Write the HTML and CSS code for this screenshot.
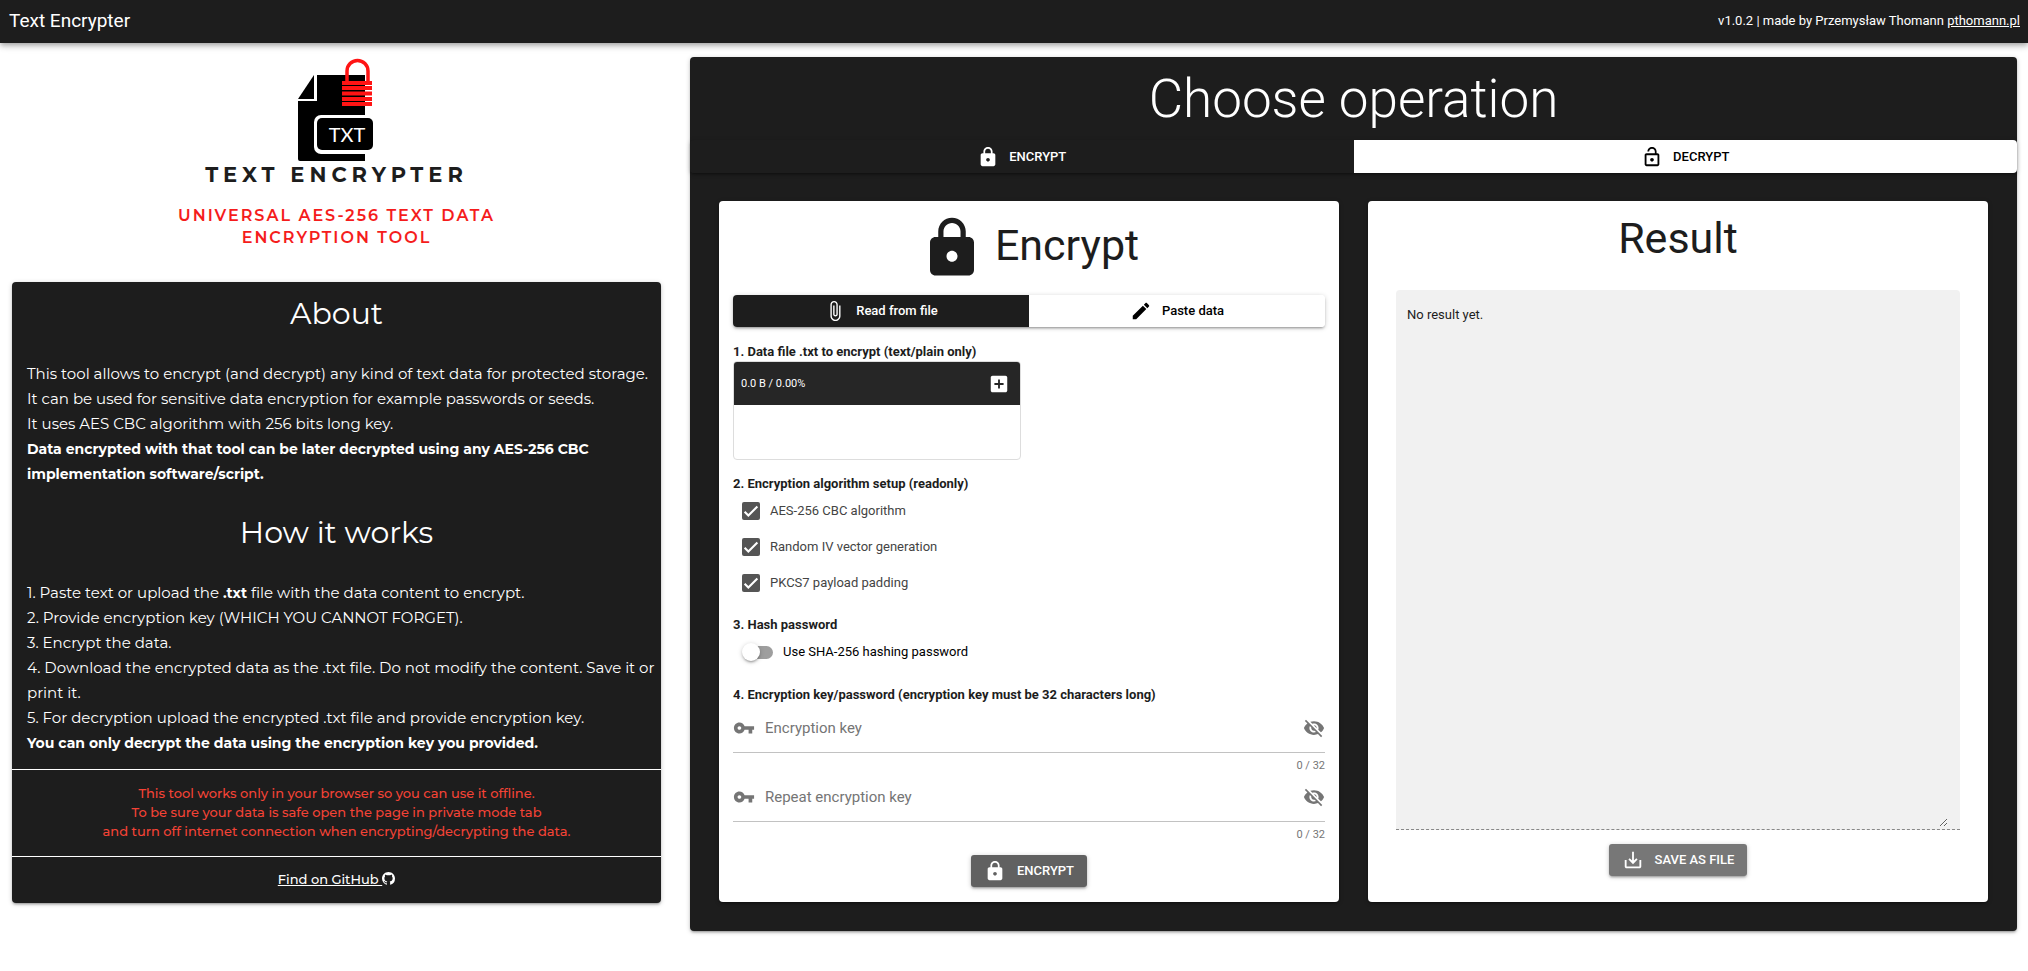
FILE: index.html
```html
<!DOCTYPE html>
<html lang="en">
<head>
<meta charset="utf-8">
<title>Text Encrypter</title>
<link rel="stylesheet" href="styles.css">
</head>
<body>
<svg class="sprite" aria-hidden="true">
  <symbol id="lock" viewBox="0 0 24 24"><path d="M18 8h-1V6c0-2.76-2.24-5-5-5S7 3.24 7 6v2H6c-1.1 0-2 .9-2 2v10c0 1.1.9 2 2 2h12c1.1 0 2-.9 2-2V10c0-1.1-.9-2-2-2zm-6 9c-1.1 0-2-.9-2-2s.9-2 2-2 2 .9 2 2-.9 2-2 2zm3.1-9H8.9V6c0-1.71 1.39-3.1 3.1-3.1 1.71 0 3.1 1.39 3.1 3.1v2z"/></symbol>
  <symbol id="lock-open" viewBox="0 0 24 24"><path d="M12 17c1.1 0 2-.9 2-2s-.9-2-2-2-2 .9-2 2 .9 2 2 2zm6-9h-1V6c0-2.76-2.24-5-5-5S7 3.24 7 6h1.9c0-1.71 1.39-3.1 3.1-3.1 1.71 0 3.1 1.39 3.1 3.1v2H6c-1.1 0-2 .9-2 2v10c0 1.1.9 2 2 2h12c1.1 0 2-.9 2-2V10c0-1.1-.9-2-2-2zm0 12H6V10h12v10z"/></symbol>
  <symbol id="attach" viewBox="0 0 24 24"><path d="M16.5 6v11.5c0 2.21-1.79 4-4 4s-4-1.79-4-4V5c0-1.38 1.12-2.5 2.5-2.5s2.5 1.12 2.5 2.5v10.5c0 .55-.45 1-1 1s-1-.45-1-1V6H10v9.5c0 1.38 1.12 2.5 2.5 2.5s2.5-1.12 2.5-2.5V5c0-2.21-1.79-4-4-4S7 2.79 7 5v12.5c0 3.04 2.46 5.5 5.5 5.5s5.5-2.46 5.5-5.5V6h-1.5z"/></symbol>
  <symbol id="edit" viewBox="0 0 24 24"><path d="M3 17.25V21h3.75L17.81 9.94l-3.75-3.75L3 17.25zM20.71 7.04c.39-.39.39-1.02 0-1.41l-2.34-2.34c-.39-.39-1.02-.39-1.41 0l-1.83 1.83 3.75 3.75 1.83-1.83z"/></symbol>
  <symbol id="add-box" viewBox="0 0 24 24"><path d="M19 3H5c-1.11 0-2 .9-2 2v14c0 1.1.89 2 2 2h14c1.1 0 2-.9 2-2V5c0-1.1-.9-2-2-2zm-2 10h-4v4h-2v-4H7v-2h4V7h2v4h4v2z"/></symbol>
  <symbol id="key" viewBox="0 0 24 24"><path d="M12.65 10C11.83 7.67 9.61 6 7 6c-3.31 0-6 2.69-6 6s2.69 6 6 6c2.61 0 4.83-1.67 5.65-4H17v4h4v-4h2v-4H12.65zM7 14c-1.1 0-2-.9-2-2s.9-2 2-2 2 .9 2 2-.9 2-2 2z"/></symbol>
  <symbol id="eye-off" viewBox="0 0 24 24"><path d="M12 7c2.76 0 5 2.24 5 5 0 .65-.13 1.26-.36 1.83l2.92 2.92c1.51-1.26 2.7-2.89 3.43-4.75-1.73-4.39-6-7.5-11-7.5-1.4 0-2.74.25-3.98.7l2.16 2.16C10.74 7.13 11.35 7 12 7zM2 4.27l2.28 2.28.46.46C3.08 8.3 1.78 10.02 1 12c1.73 4.39 6 7.5 11 7.5 1.55 0 3.03-.3 4.38-.84l.42.42L19.73 22 21 20.73 3.27 3 2 4.27zM7.53 9.8l1.55 1.55c-.05.21-.08.43-.08.65 0 1.66 1.34 3 3 3 .22 0 .44-.03.65-.08l1.55 1.55c-.67.33-1.41.53-2.2.53-2.76 0-5-2.24-5-5 0-.79.2-1.53.53-2.2zm4.31-.78l3.15 3.15.02-.16c0-1.66-1.34-3-3-3l-.17.01z"/></symbol>
  <symbol id="save" viewBox="0 0 24 24"><path d="M19 12v7H5v-7H3v7c0 1.1.9 2 2 2h14c1.1 0 2-.9 2-2v-7h-2zm-6 .67l2.59-2.58L17 11.5l-5 5-5-5 1.41-1.41L11 12.67V3h2z"/></symbol>
  <symbol id="github" viewBox="0 0 16 16"><path d="M8 0C3.58 0 0 3.58 0 8c0 3.54 2.29 6.53 5.47 7.59.4.07.55-.17.55-.38 0-.19-.01-.82-.01-1.49-2.01.37-2.53-.49-2.69-.94-.09-.23-.48-.94-.82-1.13-.28-.15-.68-.52-.01-.53.63-.01 1.08.58 1.23.82.72 1.21 1.87.87 2.33.66.07-.52.28-.87.51-1.07-1.78-.2-3.64-.89-3.64-3.95 0-.87.31-1.59.82-2.15-.08-.2-.36-1.02.08-2.12 0 0 .67-.21 2.2.82.64-.18 1.32-.27 2-.27.68 0 1.36.09 2 .27 1.53-1.04 2.2-.82 2.2-.82.44 1.1.16 1.92.08 2.12.51.56.82 1.27.82 2.15 0 3.07-1.87 3.75-3.65 3.95.29.25.54.73.54 1.48 0 1.07-.01 1.93-.01 2.2 0 .21.15.46.55.38A8.013 8.013 0 0016 8c0-4.42-3.58-8-8-8z"/></symbol>
  <symbol id="tick" viewBox="0 0 24 24"><path d="M3.5 13L8.5 18L20.5 6" fill="none" stroke="#fff" stroke-width="2.8"/></symbol>
</svg>

<header class="topbar">
  <div class="topbar-title">Text Encrypter</div>
  <div class="topbar-meta">v1.0.2 | made by Przemysław Thomann <a href="#">pthomann.pl</a></div>
</header>

<main class="page">
  <aside class="side">
    <div class="brand">
      <svg class="brand-mark" viewBox="2 -1 80 106" role="img" aria-label="Text Encrypter logo">
        <path d="M22 17H70V103H5Q3 103 3 101V42H22Z"/>
        <path d="M3 41L19 17V41Z"/>
        <path d="M21 17V42H3" fill="none" stroke="#fff" stroke-width="2"/>
        <rect x="19" y="57" width="70" height="39" rx="7" fill="#fff"/>
        <rect x="22" y="60" width="56" height="32" rx="5"/>
        <text x="52" y="84" class="brand-mark-text">TXT</text>
        <path d="M52 24V13a10 10 0 0 1 21 0V24" fill="none" stroke="#ff1414" stroke-width="3.5"/>
        <path d="M47 23h30v4H47zM47 28h30v4H47zM47 33.500h30v4H47zM47 39h30v4H47zM47 44h30v4H47z" fill="#ff1414"/>
      </svg>
      <div class="brand-name">TEXT ENCRYPTER</div>
      <p class="brand-tagline">UNIVERSAL AES-256 TEXT DATA<br>ENCRYPTION TOOL</p>
    </div>

    <section class="card about">
      <div class="about-body">
        <h2>About</h2>
        <p>This tool allows to encrypt (and decrypt) any kind of text data for protected storage.<br>It can be used for sensitive data encryption for example passwords or seeds.<br>It uses AES CBC algorithm with 256 bits long key.<br><b>Data encrypted with that tool can be later decrypted using any AES-256 CBC implementation software/script.</b></p>
        <h2>How it works</h2>
        <p>1. Paste text or upload the <b>.txt</b> file with the data content to encrypt.<br>2. Provide encryption key (WHICH YOU CANNOT FORGET).<br>3. Encrypt the data.<br>4. Download the encrypted data as the .txt file. Do not modify the content. Save it or print it.<br>5. For decryption upload the encrypted .txt file and provide encryption key.<br><b>You can only decrypt the data using the encryption key you provided.</b></p>
      </div>
      <p class="about-warning">This tool works only in your browser so you can use it offline.<br>To be sure your data is safe open the page in private mode tab<br>and turn off internet connection when encrypting/decrypting the data.</p>
      <div class="about-link"><a href="#">Find on GitHub <svg class="icon-inline"><use href="#github"/></svg></a></div>
    </section>
  </aside>

  <div class="main">
    <section class="card operation">
      <h1>Choose operation</h1>
      <div class="tabs">
        <button type="button" class="tab tab-dark"><svg class="icon"><use href="#lock"/></svg>ENCRYPT</button>
        <button type="button" class="tab tab-light"><svg class="icon"><use href="#lock-open"/></svg>DECRYPT</button>
      </div>

      <div class="panels">
        <form class="card panel panel-form">
          <h2 class="panel-title"><svg class="icon-large"><use href="#lock"/></svg><span>Encrypt</span></h2>
          <div class="source">
            <button type="button" class="tab tab-dark"><svg class="icon"><use href="#attach"/></svg>Read from file</button>
            <button type="button" class="tab tab-light"><svg class="icon"><use href="#edit"/></svg>Paste data</button>
          </div>

          <section class="step">
            <h3>1. Data file .txt to encrypt (text/plain only)</h3>
            <div class="uploader">
              <div class="uploader-head">
                <span>0.0 B / 0.00%</span>
                <button type="button" class="icon-button" aria-label="Add file"><svg class="icon"><use href="#add-box"/></svg></button>
              </div>
            </div>
          </section>

          <section class="step">
            <h3>2. Encryption algorithm setup (readonly)</h3>
            <label class="option option-muted"><span class="check"><input type="checkbox" checked><svg><use href="#tick"/></svg></span>AES-256 CBC algorithm</label>
            <label class="option option-muted"><span class="check"><input type="checkbox" checked><svg><use href="#tick"/></svg></span>Random IV vector generation</label>
            <label class="option option-muted"><span class="check"><input type="checkbox" checked><svg><use href="#tick"/></svg></span>PKCS7 payload padding</label>
          </section>

          <section class="step">
            <h3>3. Hash password</h3>
            <label class="option"><input type="checkbox" role="switch" class="switch">Use SHA-256 hashing password</label>
          </section>

          <section class="step">
            <h3>4. Encryption key/password (encryption key must be 32 characters long)</h3>
            <div class="field">
              <svg class="icon"><use href="#key"/></svg>
              <input type="password" placeholder="Encryption key" aria-label="Encryption key" maxlength="32">
              <button type="button" class="icon-button" aria-label="Show key"><svg class="icon"><use href="#eye-off"/></svg></button>
            </div>
            <div class="counter">0 / 32</div>
            <div class="field">
              <svg class="icon"><use href="#key"/></svg>
              <input type="password" placeholder="Repeat encryption key" aria-label="Repeat encryption key" maxlength="32">
              <button type="button" class="icon-button" aria-label="Show repeated key"><svg class="icon"><use href="#eye-off"/></svg></button>
            </div>
            <div class="counter">0 / 32</div>
          </section>

          <button type="button" class="action action-encrypt"><svg class="icon"><use href="#lock"/></svg>ENCRYPT</button>
        </form>

        <section class="card panel panel-result">
          <h2 class="panel-title">Result</h2>
          <div class="result-box"><textarea readonly aria-label="Result">No result yet.</textarea></div>
          <button type="button" class="action action-save"><svg class="icon"><use href="#save"/></svg>SAVE AS FILE</button>
        </section>
      </div>
    </section>
  </div>
</main>
</body>
</html>
```
FILE: styles.css
```css
:root {
  --dark: #1d1d1d;
  --shadow: 0 1px 5px rgba(0, 0, 0, .2), 0 2px 2px rgba(0, 0, 0, .14), 0 3px 1px -2px rgba(0, 0, 0, .12);
}

*, *::before, *::after { box-sizing: border-box; }

body {
  margin: 0;
  background: #fff;
  color: var(--dark);
  font: 13px/18px Roboto, "Liberation Sans", sans-serif;
}

h1, h2, h3, p { margin: 0; }
a { color: inherit; }
button, input, textarea { font: inherit; }
button { border: 0; cursor: pointer; }

.sprite { position: absolute; width: 0; height: 0; }

.icon {
  flex: none;
  width: 22px;
  height: 22px;
  fill: currentColor;
}

.topbar {
  display: flex;
  align-items: center;
  justify-content: space-between;
  height: 43px;
  padding: 0 8px 2px 9px;
  background: var(--dark);
  color: #fff;
  box-shadow: 0 2px 4px -1px rgba(0, 0, 0, .2), 0 4px 5px rgba(0, 0, 0, .14), 0 1px 10px rgba(0, 0, 0, .12);
}

.topbar-title { font-size: 19px; }

.page {
  display: grid;
  grid-template-columns: minmax(0, 1fr) minmax(0, 2fr);
  align-items: start;
}

.side { padding: 14px 15px 14px 12px; }
.main { padding: 14px 11px 14px 14px; }

.card {
  border-radius: 4px;
  box-shadow: var(--shadow);
}

/* Brand */
.side { font-family: Montserrat, Inter, sans-serif; }

.brand {
  display: flex;
  flex-direction: column;
  align-items: center;
  padding-bottom: 33px;
  text-align: center;
}

.brand-mark { width: 80px; height: 106px; }

.brand-mark-text {
  fill: #fff;
  font: 400 20px Lato, sans-serif;
  text-anchor: middle;
}

.brand-name {
  font-size: 21px;
  font-weight: 700;
  line-height: 24px;
  letter-spacing: 5px;
}

.brand-tagline {
  padding-top: 18px;
  color: #f51c1c;
  font-size: 16px;
  font-weight: 600;
  line-height: 22px;
  letter-spacing: 2px;
}

/* About */
.about {
  background: var(--dark);
  color: #fff;
}

.about-body {
  padding: 14px 5px;
  font-size: 15px;
  line-height: 25px;
}

.about-body h2 {
  font-size: 30px;
  font-weight: 400;
  line-height: 36px;
  text-align: center;
}

.about-body p { padding-left: 10px; }
.about-body h2 + p { padding-top: 29px; }
.about-body p + h2 { padding-top: 29px; }
.about-body b { font-size: 14px; font-weight: 700; line-height: 1; }

.about-warning {
  padding: 14px 14px 15px;
  border: solid #fff;
  border-width: 1px 0;
  color: #f44336;
  font-weight: 500;
  line-height: 19px;
  text-align: center;
}

.about-link {
  padding: 13px 14px 14px;
  font-weight: 500;
  line-height: 19px;
  text-align: center;
}

.icon-inline {
  width: 13px;
  height: 13px;
  fill: currentColor;
  vertical-align: -1px;
}

/* Operation */
.operation {
  background: var(--dark);
  color: #fff;
}

.operation h1 {
  padding: 12px 0 11px;
  font-size: 53px;
  font-weight: 300;
  line-height: 60px;
  text-align: center;
}

.tabs, .source {
  display: grid;
  grid-template-columns: 1fr 1fr;
  overflow: hidden;
  border-radius: 4px;
  box-shadow: var(--shadow);
}

.tab {
  display: flex;
  align-items: center;
  justify-content: center;
  gap: 10px;
  height: 33px;
  padding: 0;
  font-weight: 500;
}

.source .tab { height: 32px; }
.tab-dark { background: var(--dark); color: #fff; }
.tab-light { background: #fff; color: #000; }

.panels {
  display: grid;
  grid-template-columns: repeat(2, minmax(0, 1fr));
  gap: 29px;
  padding: 28px 29px 29px;
}

.panel {
  display: flex;
  flex-direction: column;
  background: #fff;
  color: var(--dark);
}

.panel-title {
  display: flex;
  align-items: center;
  justify-content: center;
  gap: 10px;
  font-size: 43px;
  font-weight: 400;
  line-height: 48px;
}

.panel-form { padding: 14px 14px 15px; }
.panel-form .panel-title { padding-bottom: 14px; }
.panel-form .panel-title span { padding-bottom: 6px; }

.icon-large { width: 66px; height: 66px; fill: currentColor; }

.step { padding-top: 15px; }
.source + .step, .step:nth-of-type(4) { padding-top: 16px; }

.step h3 {
  font-size: 13px;
  font-weight: 700;
  line-height: 18px;
}

.uploader {
  width: 288px;
  height: 99px;
  overflow: hidden;
  border: 1px solid #ddd;
  border-radius: 4px;
}

.uploader-head {
  display: flex;
  align-items: center;
  justify-content: space-between;
  height: 43px;
  padding: 0 10px 0 7px;
  background: #262626;
  color: #fff;
  font-size: 11px;
}

.icon-button {
  display: flex;
  padding: 0;
  background: none;
  color: inherit;
}

.option {
  display: flex;
  align-items: center;
  gap: 10px;
  height: 36px;
  padding-left: 9px;
  color: #000;
}

.option-muted { color: #444; }

.check { display: grid; width: 18px; height: 18px; }
.check > * { grid-area: 1 / 1; width: 18px; height: 18px; }

.check input {
  margin: 0;
  appearance: none;
  border-radius: 2px;
  background: #555;
}

.check svg { pointer-events: none; }

.switch {
  display: grid;
  align-items: center;
  width: 31px;
  height: 18px;
  margin: 0;
  appearance: none;
}

.switch::before, .switch::after {
  content: "";
  grid-area: 1 / 1;
}

.switch::before {
  height: 13px;
  margin-left: 3px;
  border-radius: 7px;
  background: #9e9e9e;
}

.switch::after {
  width: 18px;
  height: 18px;
  border-radius: 50%;
  background: #fff;
  box-shadow: var(--shadow);
}

.field {
  display: flex;
  align-items: center;
  gap: 10px;
  height: 49px;
  border-bottom: 1px solid #c2c2c2;
  color: #757575;
}

.field input {
  flex: 1;
  min-width: 0;
  padding: 0;
  border: 0;
  outline: 0;
  background: none;
  color: var(--dark);
  font-size: 15px;
}

.field input::placeholder { color: #757575; opacity: 1; }

.counter {
  height: 20px;
  padding-top: 4px;
  color: #757575;
  font-size: 11px;
  text-align: right;
}

.action {
  display: flex;
  align-items: center;
  align-self: center;
  gap: 11px;
  height: 32px;
  padding: 0 13px;
  border-radius: 3px;
  box-shadow: var(--shadow);
  color: #fff;
  font-weight: 500;
}

.action-encrypt { margin-top: 13px; background: #616161; }
.action-save { margin-top: 14px; background: #777; }

.panel-result { padding: 13px 28px 26px; }
.panel-result .panel-title { padding-bottom: 28px; }

.result-box {
  display: flex;
  flex: 1;
  padding: 16px 12px 2px 11px;
  border-bottom: 1px dashed #888;
  border-radius: 4px 4px 0 0;
  background: #f1f1f1;
}

.result-box textarea {
  flex: 1;
  min-width: 0;
  padding: 0;
  border: 0;
  outline: 0;
  resize: vertical;
  background: none;
  color: var(--dark);
}
```
